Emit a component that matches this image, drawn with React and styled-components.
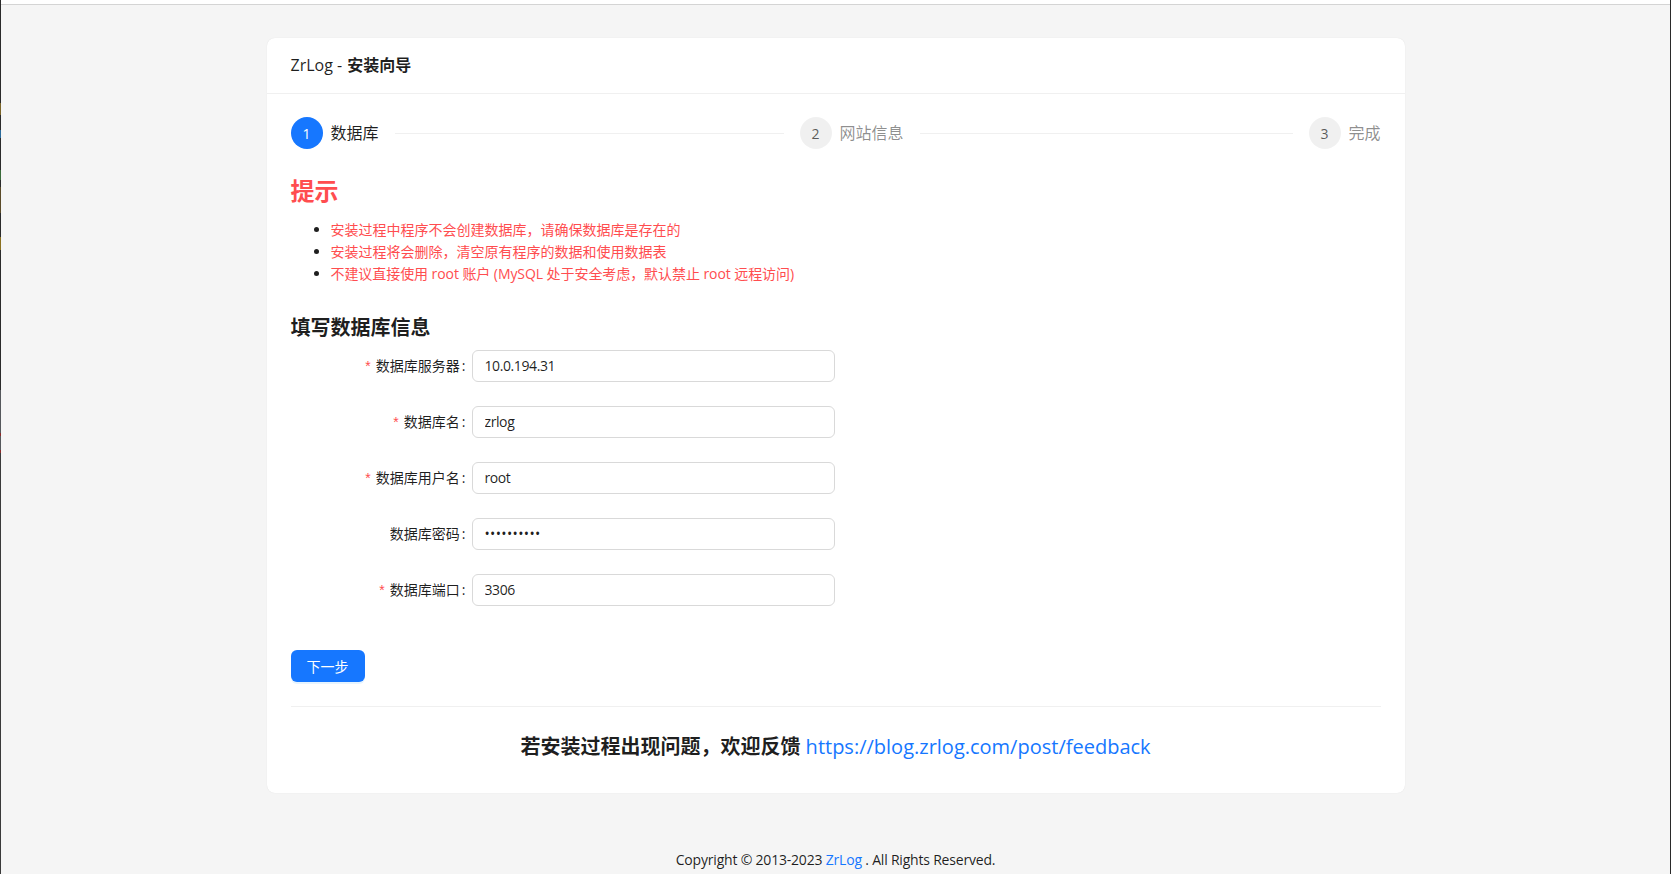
import React from 'react';
import styled, { createGlobalStyle } from 'styled-components';

const GlobalStyle = createGlobalStyle`
  html, body {
    margin: 0;
    padding: 0;
    height: 100%;
    background: #f5f5f5;
  }
  * {
    box-sizing: border-box;
  }
  body {
    font-family: "Open Sans", "Noto Sans CJK SC", sans-serif;
    font-size: 14px;
    color: rgba(0, 0, 0, 0.88);
  }
`;

// the 1px sliver on the left is another window peeking out behind the browser
const Page = styled.div`
  height: 874px;
  overflow: hidden;
  padding-left: 1px;
  background-color: #f5f5f5;
  background-image: linear-gradient(
    to bottom,
    #2a2a2a 103px, #7a6428 103px, #7a6428 115px, #2a2a2a 115px,
    #2a2a2a 130px, #2a6a9a 130px, #2a6a9a 138px, #2a2a2a 138px,
    #2a2a2a 170px, #3a6a3a 170px, #3a6a3a 180px, #2a2a2a 180px,
    #2a2a2a 187px, #5a4a28 187px, #5a4a28 213px, #2a2a2a 213px,
    #2a2a2a 237px, #8a7020 237px, #8a7020 250px, #2a2a2a 250px,
    #2a2a2a 390px, #55585c 390px, #55585c 433px, #8a2a2a 433px, #8a2a2a 436px,
    #55585c 436px, #55585c 450px, #8a2a2a 450px, #8a2a2a 453px, #3a3a3a 453px
  );
  background-size: 1px 100%;
  background-repeat: no-repeat;
  border-right: 1px solid #2a2a2a;
`;

const TopBar = styled.div`
  height: 5px;
  background: #fff;
  border-bottom: 1px solid #d4d4d4;
`;

const Card = styled.main`
  width: 1138px;
  margin: 33px auto 0;
  background: #fff;
  border-radius: 8px;
  box-shadow: 0 0 1px rgba(0, 0, 0, 0.12);
`;

const CardHead = styled.header`
  height: 56px;
  padding: 0 24px;
  line-height: 55px;
  font-size: 16px;
  font-weight: 600;
  border-bottom: 1px solid #f0f0f0;
`;

const Brand = styled.span`
  font-weight: 500;
  margin-right: 1px;
`;

const CardBody = styled.div`
  padding: 23px 24px 0;
`;

const Steps = styled.div`
  display: flex;
  align-items: center;
`;

const Step = styled.div`
  display: flex;
  align-items: center;
  flex: ${(p) => (p.$last ? '0 0 auto' : '1 1 0')};
  min-width: 0;
`;

const StepDot = styled.span`
  width: 32px;
  height: 32px;
  border-radius: 50%;
  display: flex;
  align-items: center;
  justify-content: center;
  font-size: 14px;
  background: ${(p) => (p.$active ? '#1677ff' : 'rgba(0, 0, 0, 0.06)')};
  color: ${(p) => (p.$active ? '#fff' : 'rgba(0, 0, 0, 0.65)')};
`;

const StepTitle = styled.span`
  margin-left: 8px;
  font-size: 16px;
  line-height: 32px;
  height: 32px;
  white-space: nowrap;
  color: ${(p) => (p.$active ? 'rgba(0, 0, 0, 0.88)' : 'rgba(0, 0, 0, 0.45)')};
`;

const StepLine = styled.span`
  flex: 1;
  height: 1px;
  margin: 0 16px;
  background: #f0f0f0;
`;

const Notice = styled.h3`
  margin: 26px 0 0;
  font-size: 24px;
  line-height: 32px;
  font-weight: 600;
  color: #ff4d4f;
`;

const NoticeList = styled.ul`
  margin: 12px 0 0;
  padding-left: 40px;
  font-size: 14px;
  line-height: 22px;
  color: #ff4d4f;
`;

const NoticeItem = styled.li`
  letter-spacing: ${(p) => (p.$tight ? '-0.07px' : '0')};

  &::marker {
    color: rgba(0, 0, 0, 0.88);
  }
`;

const FormTitle = styled.h4`
  margin: 29px 0 0;
  font-size: 20px;
  line-height: 28px;
  font-weight: 600;
`;

const Form = styled.form`
  width: 544px;
  margin-top: 8px;
`;

const FormRow = styled.div`
  display: grid;
  grid-template-columns: 181px 363px;
  align-items: center;
  height: 32px;
  margin-bottom: 24px;
`;

const Label = styled.label`
  text-align: right;
  padding: 0 6px 2px 0;
  font-size: 14px;
  white-space: nowrap;

  &::after {
    content: ':';
    margin-left: 2px;
  }
`;

const Required = styled.span`
  margin-right: 5px;
  color: #ff4d4f;
  font-family: "Liberation Sans", sans-serif;
`;

const Input = styled.input`
  width: 100%;
  height: 32px;
  padding: 3px 12px 5px;
  font: inherit;
  letter-spacing: ${(p) => (p.type === 'password' ? '0.35px' : '-0.4px')};
  color: rgba(0, 0, 0, 0.88);
  background: #fff;
  border: 1px solid #d9d9d9;
  border-radius: 6px;
  outline: none;
`;

const PrimaryButton = styled.button`
  display: block;
  width: 74px;
  height: 32px;
  margin-top: 44px;
  padding: 0;
  font: inherit;
  color: #fff;
  background: #1677ff;
  border: 0;
  border-radius: 6px;
  box-shadow: 0 2px 0 rgba(5, 145, 255, 0.1);
`;

const Divider = styled.hr`
  margin: 24px 0 0;
  border: 0;
  border-top: 1px solid #f0f0f0;
`;

const Feedback = styled.h4`
  margin: 24px 0 0;
  padding-bottom: 30px;
  text-align: center;
  font-size: 20px;
  line-height: 32px;
  font-weight: 600;
`;

const FeedbackLink = styled.a`
  color: #1677ff;
  text-decoration: none;
  font-weight: 500;
`;

const Footer = styled.footer`
  margin-top: 56px;
  text-align: center;
  font-size: 14px;
  line-height: 22px;
  letter-spacing: -0.2px;
`;

const FooterLink = styled.a`
  color: #1677ff;
  text-decoration: none;
`;

const fields = [
  { label: '数据库服务器', value: '10.0.194.31', required: true },
  { label: '数据库名', value: 'zrlog', required: true },
  { label: '数据库用户名', value: 'root', required: true },
  { label: '数据库密码', value: '1234567890', type: 'password' },
  { label: '数据库端口', value: '3306', required: true },
];

export default function App() {
  return (
    <Page>
      <GlobalStyle />
      <TopBar />
      <Card>
        <CardHead>
          <Brand>ZrLog -</Brand> 安装向导
        </CardHead>
        <CardBody>
          <Steps>
            <Step>
              <StepDot $active>1</StepDot>
              <StepTitle $active>数据库</StepTitle>
              <StepLine />
            </Step>
            <Step>
              <StepDot>2</StepDot>
              <StepTitle>网站信息</StepTitle>
              <StepLine />
            </Step>
            <Step $last>
              <StepDot>3</StepDot>
              <StepTitle>完成</StepTitle>
            </Step>
          </Steps>

          <Notice>提示</Notice>
          <NoticeList>
            <NoticeItem>安装过程中程序不会创建数据库，请确保数据库是存在的</NoticeItem>
            <NoticeItem>安装过程将会删除，清空原有程序的数据和使用数据表</NoticeItem>
            <NoticeItem $tight>不建议直接使用 root 账户 (MySQL 处于安全考虑，默认禁止 root 远程访问)</NoticeItem>
          </NoticeList>

          <FormTitle>填写数据库信息</FormTitle>
          <Form>
            {fields.map((f) => (
              <FormRow key={f.label}>
                <Label>
                  {f.required && <Required>*</Required>}
                  {f.label}
                </Label>
                <Input type={f.type || 'text'} defaultValue={f.value} readOnly />
              </FormRow>
            ))}
          </Form>

          <PrimaryButton type="button">下一步</PrimaryButton>
          <Divider />
          <Feedback>
            若安装过程出现问题，欢迎反馈 <FeedbackLink href="#feedback">https://blog.zrlog.com/post/feedback</FeedbackLink>
          </Feedback>
        </CardBody>
      </Card>
      <Footer>
        Copyright © 2013-2023 <FooterLink href="#zrlog">ZrLog</FooterLink> . All Rights Reserved.
      </Footer>
    </Page>
  );
}
